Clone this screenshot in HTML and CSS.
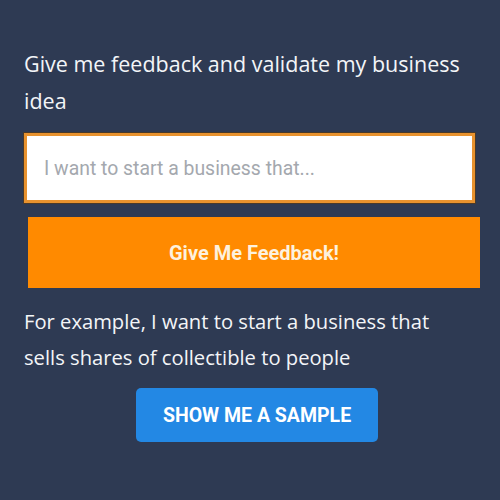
FILE: index.html
```html
<!DOCTYPE html>
<html>
<head>
<meta charset="utf-8">
<link rel="stylesheet" href="styles.css">
</head>
<body>
<main class="page">
  <p class="title">Give me feedback and validate my business idea</p>
  <div class="field"><input class="idea" type="text" placeholder="I want to start a business that..."></div>
  <button class="feedback">Give Me Feedback!</button>
  <p class="example">For example, I want to start a business that sells shares of collectible to people</p>
  <div class="sample-row"><button class="sample">SHOW ME A SAMPLE</button></div>
</main>
</body>
</html>
```
FILE: styles.css
```css
html, body {
  margin: 0;
  padding: 0;
  background: #2e3a53;
}
.page {
  width: 500px;
  height: 500px;
  box-sizing: border-box;
  padding: 45px 20px 0 24px;
  display: flex;
  flex-direction: column;
  font-family: "Open Sans", "Noto Sans", sans-serif;
  color: #f3f5f8;
}
.title {
  margin: 0;
  font-size: 21.5px;
  line-height: 37px;
  width: 456px;
}
.field {
  margin-top: 14px;
  width: 451px;
  height: 70px;
  box-sizing: border-box;
  border: 3px solid #e8922e;
  box-shadow: 0 0 0 1px #4a3a2a;
  background: #fff;
  display: flex;
}
.idea {
  border: none;
  outline: none;
  width: 100%;
  padding: 0 0 0 17px;
  font-family: Roboto, sans-serif;
  font-size: 19.4px;
  background: transparent;
  color: #333;
}
.idea::placeholder {
  color: #a4a8ae;
}
.feedback {
  margin-top: 14px;
  margin-left: 4px;
  width: 452px;
  height: 71px;
  border: none;
  background: #ff8a00;
  color: #fdf1de;
  font-family: Roboto, sans-serif;
  font-weight: bold;
  font-size: 20px;
  padding: 0;
}
.example {
  margin: 15px 0 0 0;
  font-size: 20.2px;
  line-height: 36px;
  width: 450px;
}
.sample-row {
  margin-top: 13px;
  display: flex;
  padding-left: 112px;
}
.sample {
  width: 242px;
  height: 54px;
  border: none;
  border-radius: 5px;
  background: #2388e4;
  color: #fff;
  font-family: Roboto, sans-serif;
  font-weight: bold;
  font-size: 19.5px;
  padding: 0;
}
```
